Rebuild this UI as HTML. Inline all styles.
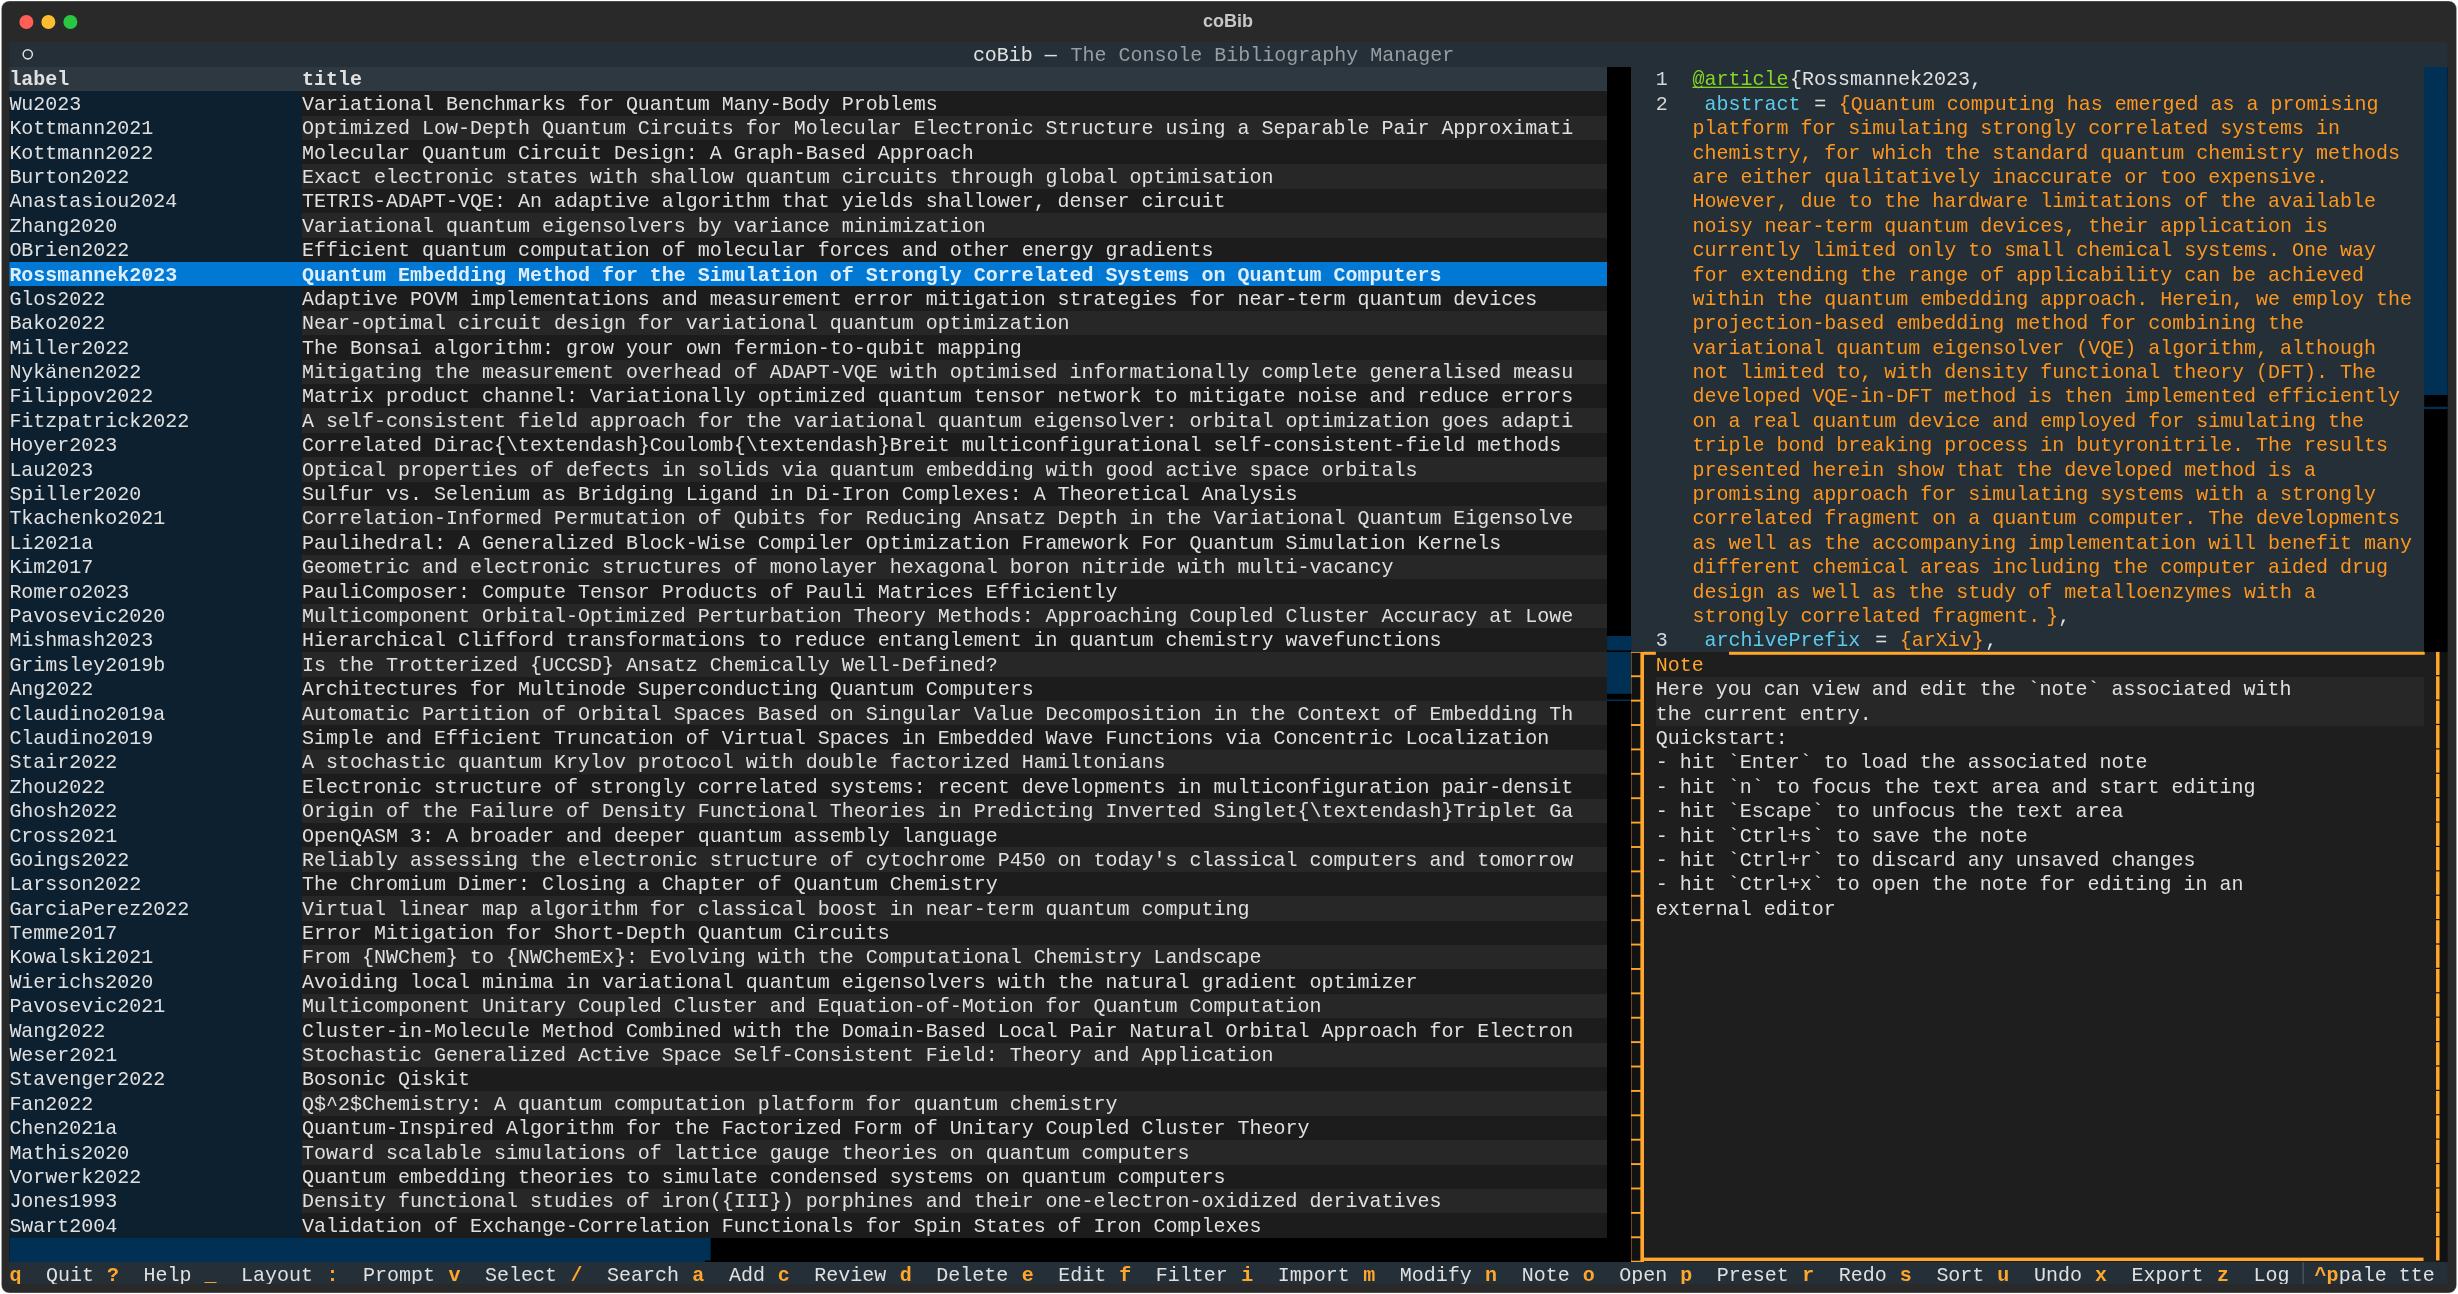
<!DOCTYPE html>
<html><head><meta charset="utf-8"><title>coBib</title>
<style>
html,body{margin:0;padding:0;background:#fff;overflow:hidden}
svg{display:block;will-change:transform}
.m text{font-family:"Liberation Mono",monospace;font-size:20px;white-space:pre}
.m text{text-decoration-skip-ink:none;text-decoration-thickness:1.2px;text-underline-offset:2.5px}
.t{font-family:"Liberation Sans",sans-serif;font-size:18px;font-weight:bold}
</style></head><body>
<svg width="2458" height="1294" viewBox="0 0 2458 1294.4">
<defs><clipPath id="ct"><rect x="0" y="0" width="2439" height="1243.4"/></clipPath></defs>
<rect x="1" y="1" width="2456" height="1292.4" rx="8" fill="#292929" stroke="rgba(255,255,255,0.35)" stroke-width="1"/>
<text class="t" x="1228" y="27" fill="#c5c8c6" text-anchor="middle">coBib</text>
<g transform="translate(26,22)"><circle cx="0" cy="0" r="7" fill="#ff5f57"/><circle cx="22" cy="0" r="7" fill="#febc2e"/><circle cx="44" cy="0" r="7" fill="#28c840"/></g>
<g transform="translate(9,41)" clip-path="url(#ct)">
<rect x="0.00" y="1.50" width="2440.00" height="24.65" fill="#242f38" shape-rendering="crispEdges"/>
<rect x="0.00" y="25.90" width="1598.20" height="24.65" fill="#2d3840" shape-rendering="crispEdges"/>
<rect x="0.00" y="50.30" width="292.80" height="24.65" fill="#0c2030" shape-rendering="crispEdges"/>
<rect x="292.80" y="50.30" width="1305.40" height="24.65" fill="#1c1c1c" shape-rendering="crispEdges"/>
<rect x="0.00" y="74.70" width="292.80" height="24.65" fill="#0c2030" shape-rendering="crispEdges"/>
<rect x="292.80" y="74.70" width="1305.40" height="24.65" fill="#272727" shape-rendering="crispEdges"/>
<rect x="0.00" y="99.10" width="292.80" height="24.65" fill="#0c2030" shape-rendering="crispEdges"/>
<rect x="292.80" y="99.10" width="1305.40" height="24.65" fill="#1c1c1c" shape-rendering="crispEdges"/>
<rect x="0.00" y="123.50" width="292.80" height="24.65" fill="#0c2030" shape-rendering="crispEdges"/>
<rect x="292.80" y="123.50" width="1305.40" height="24.65" fill="#272727" shape-rendering="crispEdges"/>
<rect x="0.00" y="147.90" width="292.80" height="24.65" fill="#0c2030" shape-rendering="crispEdges"/>
<rect x="292.80" y="147.90" width="1305.40" height="24.65" fill="#1c1c1c" shape-rendering="crispEdges"/>
<rect x="0.00" y="172.30" width="292.80" height="24.65" fill="#0c2030" shape-rendering="crispEdges"/>
<rect x="292.80" y="172.30" width="1305.40" height="24.65" fill="#272727" shape-rendering="crispEdges"/>
<rect x="0.00" y="196.70" width="292.80" height="24.65" fill="#0c2030" shape-rendering="crispEdges"/>
<rect x="292.80" y="196.70" width="1305.40" height="24.65" fill="#1c1c1c" shape-rendering="crispEdges"/>
<rect x="0.00" y="221.10" width="1598.20" height="24.65" fill="#0178d4" shape-rendering="crispEdges"/>
<rect x="0.00" y="245.50" width="292.80" height="24.65" fill="#0c2030" shape-rendering="crispEdges"/>
<rect x="292.80" y="245.50" width="1305.40" height="24.65" fill="#1c1c1c" shape-rendering="crispEdges"/>
<rect x="0.00" y="269.90" width="292.80" height="24.65" fill="#0c2030" shape-rendering="crispEdges"/>
<rect x="292.80" y="269.90" width="1305.40" height="24.65" fill="#272727" shape-rendering="crispEdges"/>
<rect x="0.00" y="294.30" width="292.80" height="24.65" fill="#0c2030" shape-rendering="crispEdges"/>
<rect x="292.80" y="294.30" width="1305.40" height="24.65" fill="#1c1c1c" shape-rendering="crispEdges"/>
<rect x="0.00" y="318.70" width="292.80" height="24.65" fill="#0c2030" shape-rendering="crispEdges"/>
<rect x="292.80" y="318.70" width="1305.40" height="24.65" fill="#272727" shape-rendering="crispEdges"/>
<rect x="0.00" y="343.10" width="292.80" height="24.65" fill="#0c2030" shape-rendering="crispEdges"/>
<rect x="292.80" y="343.10" width="1305.40" height="24.65" fill="#1c1c1c" shape-rendering="crispEdges"/>
<rect x="0.00" y="367.50" width="292.80" height="24.65" fill="#0c2030" shape-rendering="crispEdges"/>
<rect x="292.80" y="367.50" width="1305.40" height="24.65" fill="#272727" shape-rendering="crispEdges"/>
<rect x="0.00" y="391.90" width="292.80" height="24.65" fill="#0c2030" shape-rendering="crispEdges"/>
<rect x="292.80" y="391.90" width="1305.40" height="24.65" fill="#1c1c1c" shape-rendering="crispEdges"/>
<rect x="0.00" y="416.30" width="292.80" height="24.65" fill="#0c2030" shape-rendering="crispEdges"/>
<rect x="292.80" y="416.30" width="1305.40" height="24.65" fill="#272727" shape-rendering="crispEdges"/>
<rect x="0.00" y="440.70" width="292.80" height="24.65" fill="#0c2030" shape-rendering="crispEdges"/>
<rect x="292.80" y="440.70" width="1305.40" height="24.65" fill="#1c1c1c" shape-rendering="crispEdges"/>
<rect x="0.00" y="465.10" width="292.80" height="24.65" fill="#0c2030" shape-rendering="crispEdges"/>
<rect x="292.80" y="465.10" width="1305.40" height="24.65" fill="#272727" shape-rendering="crispEdges"/>
<rect x="0.00" y="489.50" width="292.80" height="24.65" fill="#0c2030" shape-rendering="crispEdges"/>
<rect x="292.80" y="489.50" width="1305.40" height="24.65" fill="#1c1c1c" shape-rendering="crispEdges"/>
<rect x="0.00" y="513.90" width="292.80" height="24.65" fill="#0c2030" shape-rendering="crispEdges"/>
<rect x="292.80" y="513.90" width="1305.40" height="24.65" fill="#272727" shape-rendering="crispEdges"/>
<rect x="0.00" y="538.30" width="292.80" height="24.65" fill="#0c2030" shape-rendering="crispEdges"/>
<rect x="292.80" y="538.30" width="1305.40" height="24.65" fill="#1c1c1c" shape-rendering="crispEdges"/>
<rect x="0.00" y="562.70" width="292.80" height="24.65" fill="#0c2030" shape-rendering="crispEdges"/>
<rect x="292.80" y="562.70" width="1305.40" height="24.65" fill="#272727" shape-rendering="crispEdges"/>
<rect x="0.00" y="587.10" width="292.80" height="24.65" fill="#0c2030" shape-rendering="crispEdges"/>
<rect x="292.80" y="587.10" width="1305.40" height="24.65" fill="#1c1c1c" shape-rendering="crispEdges"/>
<rect x="0.00" y="611.50" width="292.80" height="24.65" fill="#0c2030" shape-rendering="crispEdges"/>
<rect x="292.80" y="611.50" width="1305.40" height="24.65" fill="#272727" shape-rendering="crispEdges"/>
<rect x="0.00" y="635.90" width="292.80" height="24.65" fill="#0c2030" shape-rendering="crispEdges"/>
<rect x="292.80" y="635.90" width="1305.40" height="24.65" fill="#1c1c1c" shape-rendering="crispEdges"/>
<rect x="0.00" y="660.30" width="292.80" height="24.65" fill="#0c2030" shape-rendering="crispEdges"/>
<rect x="292.80" y="660.30" width="1305.40" height="24.65" fill="#272727" shape-rendering="crispEdges"/>
<rect x="0.00" y="684.70" width="292.80" height="24.65" fill="#0c2030" shape-rendering="crispEdges"/>
<rect x="292.80" y="684.70" width="1305.40" height="24.65" fill="#1c1c1c" shape-rendering="crispEdges"/>
<rect x="0.00" y="709.10" width="292.80" height="24.65" fill="#0c2030" shape-rendering="crispEdges"/>
<rect x="292.80" y="709.10" width="1305.40" height="24.65" fill="#272727" shape-rendering="crispEdges"/>
<rect x="0.00" y="733.50" width="292.80" height="24.65" fill="#0c2030" shape-rendering="crispEdges"/>
<rect x="292.80" y="733.50" width="1305.40" height="24.65" fill="#1c1c1c" shape-rendering="crispEdges"/>
<rect x="0.00" y="757.90" width="292.80" height="24.65" fill="#0c2030" shape-rendering="crispEdges"/>
<rect x="292.80" y="757.90" width="1305.40" height="24.65" fill="#272727" shape-rendering="crispEdges"/>
<rect x="0.00" y="782.30" width="292.80" height="24.65" fill="#0c2030" shape-rendering="crispEdges"/>
<rect x="292.80" y="782.30" width="1305.40" height="24.65" fill="#1c1c1c" shape-rendering="crispEdges"/>
<rect x="0.00" y="806.70" width="292.80" height="24.65" fill="#0c2030" shape-rendering="crispEdges"/>
<rect x="292.80" y="806.70" width="1305.40" height="24.65" fill="#272727" shape-rendering="crispEdges"/>
<rect x="0.00" y="831.10" width="292.80" height="24.65" fill="#0c2030" shape-rendering="crispEdges"/>
<rect x="292.80" y="831.10" width="1305.40" height="24.65" fill="#1c1c1c" shape-rendering="crispEdges"/>
<rect x="0.00" y="855.50" width="292.80" height="24.65" fill="#0c2030" shape-rendering="crispEdges"/>
<rect x="292.80" y="855.50" width="1305.40" height="24.65" fill="#272727" shape-rendering="crispEdges"/>
<rect x="0.00" y="879.90" width="292.80" height="24.65" fill="#0c2030" shape-rendering="crispEdges"/>
<rect x="292.80" y="879.90" width="1305.40" height="24.65" fill="#1c1c1c" shape-rendering="crispEdges"/>
<rect x="0.00" y="904.30" width="292.80" height="24.65" fill="#0c2030" shape-rendering="crispEdges"/>
<rect x="292.80" y="904.30" width="1305.40" height="24.65" fill="#272727" shape-rendering="crispEdges"/>
<rect x="0.00" y="928.70" width="292.80" height="24.65" fill="#0c2030" shape-rendering="crispEdges"/>
<rect x="292.80" y="928.70" width="1305.40" height="24.65" fill="#1c1c1c" shape-rendering="crispEdges"/>
<rect x="0.00" y="953.10" width="292.80" height="24.65" fill="#0c2030" shape-rendering="crispEdges"/>
<rect x="292.80" y="953.10" width="1305.40" height="24.65" fill="#272727" shape-rendering="crispEdges"/>
<rect x="0.00" y="977.50" width="292.80" height="24.65" fill="#0c2030" shape-rendering="crispEdges"/>
<rect x="292.80" y="977.50" width="1305.40" height="24.65" fill="#1c1c1c" shape-rendering="crispEdges"/>
<rect x="0.00" y="1001.90" width="292.80" height="24.65" fill="#0c2030" shape-rendering="crispEdges"/>
<rect x="292.80" y="1001.90" width="1305.40" height="24.65" fill="#272727" shape-rendering="crispEdges"/>
<rect x="0.00" y="1026.30" width="292.80" height="24.65" fill="#0c2030" shape-rendering="crispEdges"/>
<rect x="292.80" y="1026.30" width="1305.40" height="24.65" fill="#1c1c1c" shape-rendering="crispEdges"/>
<rect x="0.00" y="1050.70" width="292.80" height="24.65" fill="#0c2030" shape-rendering="crispEdges"/>
<rect x="292.80" y="1050.70" width="1305.40" height="24.65" fill="#272727" shape-rendering="crispEdges"/>
<rect x="0.00" y="1075.10" width="292.80" height="24.65" fill="#0c2030" shape-rendering="crispEdges"/>
<rect x="292.80" y="1075.10" width="1305.40" height="24.65" fill="#1c1c1c" shape-rendering="crispEdges"/>
<rect x="0.00" y="1099.50" width="292.80" height="24.65" fill="#0c2030" shape-rendering="crispEdges"/>
<rect x="292.80" y="1099.50" width="1305.40" height="24.65" fill="#272727" shape-rendering="crispEdges"/>
<rect x="0.00" y="1123.90" width="292.80" height="24.65" fill="#0c2030" shape-rendering="crispEdges"/>
<rect x="292.80" y="1123.90" width="1305.40" height="24.65" fill="#1c1c1c" shape-rendering="crispEdges"/>
<rect x="0.00" y="1148.30" width="292.80" height="24.65" fill="#0c2030" shape-rendering="crispEdges"/>
<rect x="292.80" y="1148.30" width="1305.40" height="24.65" fill="#272727" shape-rendering="crispEdges"/>
<rect x="0.00" y="1172.70" width="292.80" height="24.65" fill="#0c2030" shape-rendering="crispEdges"/>
<rect x="292.80" y="1172.70" width="1305.40" height="24.65" fill="#1c1c1c" shape-rendering="crispEdges"/>
<rect x="1598.20" y="25.90" width="24.40" height="24.65" fill="#000000" shape-rendering="crispEdges"/>
<rect x="1598.20" y="50.30" width="24.40" height="24.65" fill="#000000" shape-rendering="crispEdges"/>
<rect x="1598.20" y="74.70" width="24.40" height="24.65" fill="#000000" shape-rendering="crispEdges"/>
<rect x="1598.20" y="99.10" width="24.40" height="24.65" fill="#000000" shape-rendering="crispEdges"/>
<rect x="1598.20" y="123.50" width="24.40" height="24.65" fill="#000000" shape-rendering="crispEdges"/>
<rect x="1598.20" y="147.90" width="24.40" height="24.65" fill="#000000" shape-rendering="crispEdges"/>
<rect x="1598.20" y="172.30" width="24.40" height="24.65" fill="#000000" shape-rendering="crispEdges"/>
<rect x="1598.20" y="196.70" width="24.40" height="24.65" fill="#000000" shape-rendering="crispEdges"/>
<rect x="1598.20" y="221.10" width="24.40" height="24.65" fill="#000000" shape-rendering="crispEdges"/>
<rect x="1598.20" y="245.50" width="24.40" height="24.65" fill="#000000" shape-rendering="crispEdges"/>
<rect x="1598.20" y="269.90" width="24.40" height="24.65" fill="#000000" shape-rendering="crispEdges"/>
<rect x="1598.20" y="294.30" width="24.40" height="24.65" fill="#000000" shape-rendering="crispEdges"/>
<rect x="1598.20" y="318.70" width="24.40" height="24.65" fill="#000000" shape-rendering="crispEdges"/>
<rect x="1598.20" y="343.10" width="24.40" height="24.65" fill="#000000" shape-rendering="crispEdges"/>
<rect x="1598.20" y="367.50" width="24.40" height="24.65" fill="#000000" shape-rendering="crispEdges"/>
<rect x="1598.20" y="391.90" width="24.40" height="24.65" fill="#000000" shape-rendering="crispEdges"/>
<rect x="1598.20" y="416.30" width="24.40" height="24.65" fill="#000000" shape-rendering="crispEdges"/>
<rect x="1598.20" y="440.70" width="24.40" height="24.65" fill="#000000" shape-rendering="crispEdges"/>
<rect x="1598.20" y="465.10" width="24.40" height="24.65" fill="#000000" shape-rendering="crispEdges"/>
<rect x="1598.20" y="489.50" width="24.40" height="24.65" fill="#000000" shape-rendering="crispEdges"/>
<rect x="1598.20" y="513.90" width="24.40" height="24.65" fill="#000000" shape-rendering="crispEdges"/>
<rect x="1598.20" y="538.30" width="24.40" height="24.65" fill="#000000" shape-rendering="crispEdges"/>
<rect x="1598.20" y="562.70" width="24.40" height="24.65" fill="#000000" shape-rendering="crispEdges"/>
<rect x="1598.20" y="587.10" width="24.40" height="24.65" fill="#000000" shape-rendering="crispEdges"/>
<rect x="1598.20" y="611.50" width="24.40" height="24.65" fill="#000000" shape-rendering="crispEdges"/>
<rect x="1598.20" y="635.90" width="24.40" height="24.65" fill="#000000" shape-rendering="crispEdges"/>
<rect x="1598.20" y="660.30" width="24.40" height="24.65" fill="#000000" shape-rendering="crispEdges"/>
<rect x="1598.20" y="684.70" width="24.40" height="24.65" fill="#000000" shape-rendering="crispEdges"/>
<rect x="1598.20" y="709.10" width="24.40" height="24.65" fill="#000000" shape-rendering="crispEdges"/>
<rect x="1598.20" y="733.50" width="24.40" height="24.65" fill="#000000" shape-rendering="crispEdges"/>
<rect x="1598.20" y="757.90" width="24.40" height="24.65" fill="#000000" shape-rendering="crispEdges"/>
<rect x="1598.20" y="782.30" width="24.40" height="24.65" fill="#000000" shape-rendering="crispEdges"/>
<rect x="1598.20" y="806.70" width="24.40" height="24.65" fill="#000000" shape-rendering="crispEdges"/>
<rect x="1598.20" y="831.10" width="24.40" height="24.65" fill="#000000" shape-rendering="crispEdges"/>
<rect x="1598.20" y="855.50" width="24.40" height="24.65" fill="#000000" shape-rendering="crispEdges"/>
<rect x="1598.20" y="879.90" width="24.40" height="24.65" fill="#000000" shape-rendering="crispEdges"/>
<rect x="1598.20" y="904.30" width="24.40" height="24.65" fill="#000000" shape-rendering="crispEdges"/>
<rect x="1598.20" y="928.70" width="24.40" height="24.65" fill="#000000" shape-rendering="crispEdges"/>
<rect x="1598.20" y="953.10" width="24.40" height="24.65" fill="#000000" shape-rendering="crispEdges"/>
<rect x="1598.20" y="977.50" width="24.40" height="24.65" fill="#000000" shape-rendering="crispEdges"/>
<rect x="1598.20" y="1001.90" width="24.40" height="24.65" fill="#000000" shape-rendering="crispEdges"/>
<rect x="1598.20" y="1026.30" width="24.40" height="24.65" fill="#000000" shape-rendering="crispEdges"/>
<rect x="1598.20" y="1050.70" width="24.40" height="24.65" fill="#000000" shape-rendering="crispEdges"/>
<rect x="1598.20" y="1075.10" width="24.40" height="24.65" fill="#000000" shape-rendering="crispEdges"/>
<rect x="1598.20" y="1099.50" width="24.40" height="24.65" fill="#000000" shape-rendering="crispEdges"/>
<rect x="1598.20" y="1123.90" width="24.40" height="24.65" fill="#000000" shape-rendering="crispEdges"/>
<rect x="1598.20" y="1148.30" width="24.40" height="24.65" fill="#000000" shape-rendering="crispEdges"/>
<rect x="1598.20" y="1172.70" width="24.40" height="24.65" fill="#000000" shape-rendering="crispEdges"/>
<rect x="1598.20" y="611.50" width="24.40" height="24.65" fill="#003054" shape-rendering="crispEdges"/>
<rect x="1598.20" y="635.90" width="24.40" height="24.65" fill="#003054" shape-rendering="crispEdges"/>
<rect x="0.00" y="1197.10" width="1598.20" height="24.65" fill="#000000" shape-rendering="crispEdges"/>
<rect x="0.00" y="1197.10" width="695.40" height="24.65" fill="#003054" shape-rendering="crispEdges"/>
<rect x="1598.20" y="1197.10" width="24.40" height="24.65" fill="#000000" shape-rendering="crispEdges"/>
<rect x="1622.60" y="25.90" width="793.00" height="24.65" fill="#242f38" shape-rendering="crispEdges"/>
<rect x="2415.60" y="25.90" width="24.40" height="24.65" fill="#000000" shape-rendering="crispEdges"/>
<rect x="1622.60" y="50.30" width="793.00" height="24.65" fill="#242f38" shape-rendering="crispEdges"/>
<rect x="2415.60" y="50.30" width="24.40" height="24.65" fill="#000000" shape-rendering="crispEdges"/>
<rect x="1622.60" y="74.70" width="793.00" height="24.65" fill="#242f38" shape-rendering="crispEdges"/>
<rect x="2415.60" y="74.70" width="24.40" height="24.65" fill="#000000" shape-rendering="crispEdges"/>
<rect x="1622.60" y="99.10" width="793.00" height="24.65" fill="#242f38" shape-rendering="crispEdges"/>
<rect x="2415.60" y="99.10" width="24.40" height="24.65" fill="#000000" shape-rendering="crispEdges"/>
<rect x="1622.60" y="123.50" width="793.00" height="24.65" fill="#242f38" shape-rendering="crispEdges"/>
<rect x="2415.60" y="123.50" width="24.40" height="24.65" fill="#000000" shape-rendering="crispEdges"/>
<rect x="1622.60" y="147.90" width="793.00" height="24.65" fill="#242f38" shape-rendering="crispEdges"/>
<rect x="2415.60" y="147.90" width="24.40" height="24.65" fill="#000000" shape-rendering="crispEdges"/>
<rect x="1622.60" y="172.30" width="793.00" height="24.65" fill="#242f38" shape-rendering="crispEdges"/>
<rect x="2415.60" y="172.30" width="24.40" height="24.65" fill="#000000" shape-rendering="crispEdges"/>
<rect x="1622.60" y="196.70" width="793.00" height="24.65" fill="#242f38" shape-rendering="crispEdges"/>
<rect x="2415.60" y="196.70" width="24.40" height="24.65" fill="#000000" shape-rendering="crispEdges"/>
<rect x="1622.60" y="221.10" width="793.00" height="24.65" fill="#242f38" shape-rendering="crispEdges"/>
<rect x="2415.60" y="221.10" width="24.40" height="24.65" fill="#000000" shape-rendering="crispEdges"/>
<rect x="1622.60" y="245.50" width="793.00" height="24.65" fill="#242f38" shape-rendering="crispEdges"/>
<rect x="2415.60" y="245.50" width="24.40" height="24.65" fill="#000000" shape-rendering="crispEdges"/>
<rect x="1622.60" y="269.90" width="793.00" height="24.65" fill="#242f38" shape-rendering="crispEdges"/>
<rect x="2415.60" y="269.90" width="24.40" height="24.65" fill="#000000" shape-rendering="crispEdges"/>
<rect x="1622.60" y="294.30" width="793.00" height="24.65" fill="#242f38" shape-rendering="crispEdges"/>
<rect x="2415.60" y="294.30" width="24.40" height="24.65" fill="#000000" shape-rendering="crispEdges"/>
<rect x="1622.60" y="318.70" width="793.00" height="24.65" fill="#242f38" shape-rendering="crispEdges"/>
<rect x="2415.60" y="318.70" width="24.40" height="24.65" fill="#000000" shape-rendering="crispEdges"/>
<rect x="1622.60" y="343.10" width="793.00" height="24.65" fill="#242f38" shape-rendering="crispEdges"/>
<rect x="2415.60" y="343.10" width="24.40" height="24.65" fill="#000000" shape-rendering="crispEdges"/>
<rect x="1622.60" y="367.50" width="793.00" height="24.65" fill="#242f38" shape-rendering="crispEdges"/>
<rect x="2415.60" y="367.50" width="24.40" height="24.65" fill="#000000" shape-rendering="crispEdges"/>
<rect x="1622.60" y="391.90" width="793.00" height="24.65" fill="#242f38" shape-rendering="crispEdges"/>
<rect x="2415.60" y="391.90" width="24.40" height="24.65" fill="#000000" shape-rendering="crispEdges"/>
<rect x="1622.60" y="416.30" width="793.00" height="24.65" fill="#242f38" shape-rendering="crispEdges"/>
<rect x="2415.60" y="416.30" width="24.40" height="24.65" fill="#000000" shape-rendering="crispEdges"/>
<rect x="1622.60" y="440.70" width="793.00" height="24.65" fill="#242f38" shape-rendering="crispEdges"/>
<rect x="2415.60" y="440.70" width="24.40" height="24.65" fill="#000000" shape-rendering="crispEdges"/>
<rect x="1622.60" y="465.10" width="793.00" height="24.65" fill="#242f38" shape-rendering="crispEdges"/>
<rect x="2415.60" y="465.10" width="24.40" height="24.65" fill="#000000" shape-rendering="crispEdges"/>
<rect x="1622.60" y="489.50" width="793.00" height="24.65" fill="#242f38" shape-rendering="crispEdges"/>
<rect x="2415.60" y="489.50" width="24.40" height="24.65" fill="#000000" shape-rendering="crispEdges"/>
<rect x="1622.60" y="513.90" width="793.00" height="24.65" fill="#242f38" shape-rendering="crispEdges"/>
<rect x="2415.60" y="513.90" width="24.40" height="24.65" fill="#000000" shape-rendering="crispEdges"/>
<rect x="1622.60" y="538.30" width="793.00" height="24.65" fill="#242f38" shape-rendering="crispEdges"/>
<rect x="2415.60" y="538.30" width="24.40" height="24.65" fill="#000000" shape-rendering="crispEdges"/>
<rect x="1622.60" y="562.70" width="793.00" height="24.65" fill="#242f38" shape-rendering="crispEdges"/>
<rect x="2415.60" y="562.70" width="24.40" height="24.65" fill="#000000" shape-rendering="crispEdges"/>
<rect x="1622.60" y="587.10" width="793.00" height="24.65" fill="#242f38" shape-rendering="crispEdges"/>
<rect x="2415.60" y="587.10" width="24.40" height="24.65" fill="#000000" shape-rendering="crispEdges"/>
<rect x="2415.60" y="25.90" width="24.40" height="24.65" fill="#003054" shape-rendering="crispEdges"/>
<rect x="2415.60" y="50.30" width="24.40" height="24.65" fill="#003054" shape-rendering="crispEdges"/>
<rect x="2415.60" y="74.70" width="24.40" height="24.65" fill="#003054" shape-rendering="crispEdges"/>
<rect x="2415.60" y="99.10" width="24.40" height="24.65" fill="#003054" shape-rendering="crispEdges"/>
<rect x="2415.60" y="123.50" width="24.40" height="24.65" fill="#003054" shape-rendering="crispEdges"/>
<rect x="2415.60" y="147.90" width="24.40" height="24.65" fill="#003054" shape-rendering="crispEdges"/>
<rect x="2415.60" y="172.30" width="24.40" height="24.65" fill="#003054" shape-rendering="crispEdges"/>
<rect x="2415.60" y="196.70" width="24.40" height="24.65" fill="#003054" shape-rendering="crispEdges"/>
<rect x="2415.60" y="221.10" width="24.40" height="24.65" fill="#003054" shape-rendering="crispEdges"/>
<rect x="2415.60" y="245.50" width="24.40" height="24.65" fill="#003054" shape-rendering="crispEdges"/>
<rect x="2415.60" y="269.90" width="24.40" height="24.65" fill="#003054" shape-rendering="crispEdges"/>
<rect x="2415.60" y="294.30" width="24.40" height="24.65" fill="#003054" shape-rendering="crispEdges"/>
<rect x="2415.60" y="318.70" width="24.40" height="24.65" fill="#003054" shape-rendering="crispEdges"/>
<rect x="2415.60" y="343.10" width="24.40" height="24.65" fill="#003054" shape-rendering="crispEdges"/>
<rect x="1622.60" y="611.50" width="12.20" height="24.65" fill="#ffa62b" shape-rendering="crispEdges"/>
<rect x="1634.80" y="611.50" width="793.00" height="24.65" fill="#1e1e1e" shape-rendering="crispEdges"/>
<rect x="2427.80" y="611.50" width="12.20" height="24.65" fill="#121212" shape-rendering="crispEdges"/>
<rect x="1622.60" y="635.90" width="12.20" height="24.65" fill="#ffa62b" shape-rendering="crispEdges"/>
<rect x="1634.80" y="635.90" width="793.00" height="24.65" fill="#1e1e1e" shape-rendering="crispEdges"/>
<rect x="2427.80" y="635.90" width="12.20" height="24.65" fill="#121212" shape-rendering="crispEdges"/>
<rect x="1622.60" y="660.30" width="12.20" height="24.65" fill="#ffa62b" shape-rendering="crispEdges"/>
<rect x="1634.80" y="660.30" width="793.00" height="24.65" fill="#1e1e1e" shape-rendering="crispEdges"/>
<rect x="2427.80" y="660.30" width="12.20" height="24.65" fill="#121212" shape-rendering="crispEdges"/>
<rect x="1622.60" y="684.70" width="12.20" height="24.65" fill="#ffa62b" shape-rendering="crispEdges"/>
<rect x="1634.80" y="684.70" width="793.00" height="24.65" fill="#1e1e1e" shape-rendering="crispEdges"/>
<rect x="2427.80" y="684.70" width="12.20" height="24.65" fill="#121212" shape-rendering="crispEdges"/>
<rect x="1622.60" y="709.10" width="12.20" height="24.65" fill="#ffa62b" shape-rendering="crispEdges"/>
<rect x="1634.80" y="709.10" width="793.00" height="24.65" fill="#1e1e1e" shape-rendering="crispEdges"/>
<rect x="2427.80" y="709.10" width="12.20" height="24.65" fill="#121212" shape-rendering="crispEdges"/>
<rect x="1622.60" y="733.50" width="12.20" height="24.65" fill="#ffa62b" shape-rendering="crispEdges"/>
<rect x="1634.80" y="733.50" width="793.00" height="24.65" fill="#1e1e1e" shape-rendering="crispEdges"/>
<rect x="2427.80" y="733.50" width="12.20" height="24.65" fill="#121212" shape-rendering="crispEdges"/>
<rect x="1622.60" y="757.90" width="12.20" height="24.65" fill="#ffa62b" shape-rendering="crispEdges"/>
<rect x="1634.80" y="757.90" width="793.00" height="24.65" fill="#1e1e1e" shape-rendering="crispEdges"/>
<rect x="2427.80" y="757.90" width="12.20" height="24.65" fill="#121212" shape-rendering="crispEdges"/>
<rect x="1622.60" y="782.30" width="12.20" height="24.65" fill="#ffa62b" shape-rendering="crispEdges"/>
<rect x="1634.80" y="782.30" width="793.00" height="24.65" fill="#1e1e1e" shape-rendering="crispEdges"/>
<rect x="2427.80" y="782.30" width="12.20" height="24.65" fill="#121212" shape-rendering="crispEdges"/>
<rect x="1622.60" y="806.70" width="12.20" height="24.65" fill="#ffa62b" shape-rendering="crispEdges"/>
<rect x="1634.80" y="806.70" width="793.00" height="24.65" fill="#1e1e1e" shape-rendering="crispEdges"/>
<rect x="2427.80" y="806.70" width="12.20" height="24.65" fill="#121212" shape-rendering="crispEdges"/>
<rect x="1622.60" y="831.10" width="12.20" height="24.65" fill="#ffa62b" shape-rendering="crispEdges"/>
<rect x="1634.80" y="831.10" width="793.00" height="24.65" fill="#1e1e1e" shape-rendering="crispEdges"/>
<rect x="2427.80" y="831.10" width="12.20" height="24.65" fill="#121212" shape-rendering="crispEdges"/>
<rect x="1622.60" y="855.50" width="12.20" height="24.65" fill="#ffa62b" shape-rendering="crispEdges"/>
<rect x="1634.80" y="855.50" width="793.00" height="24.65" fill="#1e1e1e" shape-rendering="crispEdges"/>
<rect x="2427.80" y="855.50" width="12.20" height="24.65" fill="#121212" shape-rendering="crispEdges"/>
<rect x="1622.60" y="879.90" width="12.20" height="24.65" fill="#ffa62b" shape-rendering="crispEdges"/>
<rect x="1634.80" y="879.90" width="793.00" height="24.65" fill="#1e1e1e" shape-rendering="crispEdges"/>
<rect x="2427.80" y="879.90" width="12.20" height="24.65" fill="#121212" shape-rendering="crispEdges"/>
<rect x="1622.60" y="904.30" width="12.20" height="24.65" fill="#ffa62b" shape-rendering="crispEdges"/>
<rect x="1634.80" y="904.30" width="793.00" height="24.65" fill="#1e1e1e" shape-rendering="crispEdges"/>
<rect x="2427.80" y="904.30" width="12.20" height="24.65" fill="#121212" shape-rendering="crispEdges"/>
<rect x="1622.60" y="928.70" width="12.20" height="24.65" fill="#ffa62b" shape-rendering="crispEdges"/>
<rect x="1634.80" y="928.70" width="793.00" height="24.65" fill="#1e1e1e" shape-rendering="crispEdges"/>
<rect x="2427.80" y="928.70" width="12.20" height="24.65" fill="#121212" shape-rendering="crispEdges"/>
<rect x="1622.60" y="953.10" width="12.20" height="24.65" fill="#ffa62b" shape-rendering="crispEdges"/>
<rect x="1634.80" y="953.10" width="793.00" height="24.65" fill="#1e1e1e" shape-rendering="crispEdges"/>
<rect x="2427.80" y="953.10" width="12.20" height="24.65" fill="#121212" shape-rendering="crispEdges"/>
<rect x="1622.60" y="977.50" width="12.20" height="24.65" fill="#ffa62b" shape-rendering="crispEdges"/>
<rect x="1634.80" y="977.50" width="793.00" height="24.65" fill="#1e1e1e" shape-rendering="crispEdges"/>
<rect x="2427.80" y="977.50" width="12.20" height="24.65" fill="#121212" shape-rendering="crispEdges"/>
<rect x="1622.60" y="1001.90" width="12.20" height="24.65" fill="#ffa62b" shape-rendering="crispEdges"/>
<rect x="1634.80" y="1001.90" width="793.00" height="24.65" fill="#1e1e1e" shape-rendering="crispEdges"/>
<rect x="2427.80" y="1001.90" width="12.20" height="24.65" fill="#121212" shape-rendering="crispEdges"/>
<rect x="1622.60" y="1026.30" width="12.20" height="24.65" fill="#ffa62b" shape-rendering="crispEdges"/>
<rect x="1634.80" y="1026.30" width="793.00" height="24.65" fill="#1e1e1e" shape-rendering="crispEdges"/>
<rect x="2427.80" y="1026.30" width="12.20" height="24.65" fill="#121212" shape-rendering="crispEdges"/>
<rect x="1622.60" y="1050.70" width="12.20" height="24.65" fill="#ffa62b" shape-rendering="crispEdges"/>
<rect x="1634.80" y="1050.70" width="793.00" height="24.65" fill="#1e1e1e" shape-rendering="crispEdges"/>
<rect x="2427.80" y="1050.70" width="12.20" height="24.65" fill="#121212" shape-rendering="crispEdges"/>
<rect x="1622.60" y="1075.10" width="12.20" height="24.65" fill="#ffa62b" shape-rendering="crispEdges"/>
<rect x="1634.80" y="1075.10" width="793.00" height="24.65" fill="#1e1e1e" shape-rendering="crispEdges"/>
<rect x="2427.80" y="1075.10" width="12.20" height="24.65" fill="#121212" shape-rendering="crispEdges"/>
<rect x="1622.60" y="1099.50" width="12.20" height="24.65" fill="#ffa62b" shape-rendering="crispEdges"/>
<rect x="1634.80" y="1099.50" width="793.00" height="24.65" fill="#1e1e1e" shape-rendering="crispEdges"/>
<rect x="2427.80" y="1099.50" width="12.20" height="24.65" fill="#121212" shape-rendering="crispEdges"/>
<rect x="1622.60" y="1123.90" width="12.20" height="24.65" fill="#ffa62b" shape-rendering="crispEdges"/>
<rect x="1634.80" y="1123.90" width="793.00" height="24.65" fill="#1e1e1e" shape-rendering="crispEdges"/>
<rect x="2427.80" y="1123.90" width="12.20" height="24.65" fill="#121212" shape-rendering="crispEdges"/>
<rect x="1622.60" y="1148.30" width="12.20" height="24.65" fill="#ffa62b" shape-rendering="crispEdges"/>
<rect x="1634.80" y="1148.30" width="793.00" height="24.65" fill="#1e1e1e" shape-rendering="crispEdges"/>
<rect x="2427.80" y="1148.30" width="12.20" height="24.65" fill="#121212" shape-rendering="crispEdges"/>
<rect x="1622.60" y="1172.70" width="12.20" height="24.65" fill="#ffa62b" shape-rendering="crispEdges"/>
<rect x="1634.80" y="1172.70" width="793.00" height="24.65" fill="#1e1e1e" shape-rendering="crispEdges"/>
<rect x="2427.80" y="1172.70" width="12.20" height="24.65" fill="#121212" shape-rendering="crispEdges"/>
<rect x="1622.60" y="1197.10" width="12.20" height="24.65" fill="#ffa62b" shape-rendering="crispEdges"/>
<rect x="1634.80" y="1197.10" width="793.00" height="24.65" fill="#1e1e1e" shape-rendering="crispEdges"/>
<rect x="2427.80" y="1197.10" width="12.20" height="24.65" fill="#121212" shape-rendering="crispEdges"/>
<rect x="1647.00" y="635.90" width="768.60" height="24.65" fill="#272727" shape-rendering="crispEdges"/>
<rect x="1647.00" y="660.30" width="768.60" height="24.65" fill="#272727" shape-rendering="crispEdges"/>
<rect x="0.00" y="1221.50" width="2440.00" height="24.65" fill="#242f38" shape-rendering="crispEdges"/>
<circle cx="18.40" cy="13.30" r="4.6" fill="none" stroke="#e0e0e0" stroke-width="1.5"/>
<rect x="1598.20" y="595.20" width="24.40" height="14.40" fill="#003054"/>
<rect x="1598.20" y="653.00" width="24.40" height="5.70" fill="#000000"/>
<rect x="695.40" y="1197.20" width="6.10" height="22.70" fill="#003054"/>
<rect x="2415.60" y="354.10" width="24.40" height="11.80" fill="#000000"/>
<rect x="1683.60" y="45.70" width="96.00" height="1.30" fill="#85d723"/>
<rect x="1622.50" y="612.00" width="9.00" height="22.50" fill="#121212"/>
<rect x="2427.40" y="611.10" width="3.50" height="23.20" fill="#ffa62b"/>
<rect x="1622.50" y="636.40" width="9.00" height="22.50" fill="#121212"/>
<rect x="2427.40" y="635.50" width="3.50" height="23.20" fill="#ffa62b"/>
<rect x="1622.50" y="660.80" width="9.00" height="22.50" fill="#121212"/>
<rect x="2427.40" y="659.90" width="3.50" height="23.20" fill="#ffa62b"/>
<rect x="1622.50" y="685.20" width="9.00" height="22.50" fill="#121212"/>
<rect x="2427.40" y="684.30" width="3.50" height="23.20" fill="#ffa62b"/>
<rect x="1622.50" y="709.60" width="9.00" height="22.50" fill="#121212"/>
<rect x="2427.40" y="708.70" width="3.50" height="23.20" fill="#ffa62b"/>
<rect x="1622.50" y="734.00" width="9.00" height="22.50" fill="#121212"/>
<rect x="2427.40" y="733.10" width="3.50" height="23.20" fill="#ffa62b"/>
<rect x="1622.50" y="758.40" width="9.00" height="22.50" fill="#121212"/>
<rect x="2427.40" y="757.50" width="3.50" height="23.20" fill="#ffa62b"/>
<rect x="1622.50" y="782.80" width="9.00" height="22.50" fill="#121212"/>
<rect x="2427.40" y="781.90" width="3.50" height="23.20" fill="#ffa62b"/>
<rect x="1622.50" y="807.20" width="9.00" height="22.50" fill="#121212"/>
<rect x="2427.40" y="806.30" width="3.50" height="23.20" fill="#ffa62b"/>
<rect x="1622.50" y="831.60" width="9.00" height="22.50" fill="#121212"/>
<rect x="2427.40" y="830.70" width="3.50" height="23.20" fill="#ffa62b"/>
<rect x="1622.50" y="856.00" width="9.00" height="22.50" fill="#121212"/>
<rect x="2427.40" y="855.10" width="3.50" height="23.20" fill="#ffa62b"/>
<rect x="1622.50" y="880.40" width="9.00" height="22.50" fill="#121212"/>
<rect x="2427.40" y="879.50" width="3.50" height="23.20" fill="#ffa62b"/>
<rect x="1622.50" y="904.80" width="9.00" height="22.50" fill="#121212"/>
<rect x="2427.40" y="903.90" width="3.50" height="23.20" fill="#ffa62b"/>
<rect x="1622.50" y="929.20" width="9.00" height="22.50" fill="#121212"/>
<rect x="2427.40" y="928.30" width="3.50" height="23.20" fill="#ffa62b"/>
<rect x="1622.50" y="953.60" width="9.00" height="22.50" fill="#121212"/>
<rect x="2427.40" y="952.70" width="3.50" height="23.20" fill="#ffa62b"/>
<rect x="1622.50" y="978.00" width="9.00" height="22.50" fill="#121212"/>
<rect x="2427.40" y="977.10" width="3.50" height="23.20" fill="#ffa62b"/>
<rect x="1622.50" y="1002.40" width="9.00" height="22.50" fill="#121212"/>
<rect x="2427.40" y="1001.50" width="3.50" height="23.20" fill="#ffa62b"/>
<rect x="1622.50" y="1026.80" width="9.00" height="22.50" fill="#121212"/>
<rect x="2427.40" y="1025.90" width="3.50" height="23.20" fill="#ffa62b"/>
<rect x="1622.50" y="1051.20" width="9.00" height="22.50" fill="#121212"/>
<rect x="2427.40" y="1050.30" width="3.50" height="23.20" fill="#ffa62b"/>
<rect x="1622.50" y="1075.60" width="9.00" height="22.50" fill="#121212"/>
<rect x="2427.40" y="1074.70" width="3.50" height="23.20" fill="#ffa62b"/>
<rect x="1622.50" y="1100.00" width="9.00" height="22.50" fill="#121212"/>
<rect x="2427.40" y="1099.10" width="3.50" height="23.20" fill="#ffa62b"/>
<rect x="1622.50" y="1124.40" width="9.00" height="22.50" fill="#121212"/>
<rect x="2427.40" y="1123.50" width="3.50" height="23.20" fill="#ffa62b"/>
<rect x="1622.50" y="1148.80" width="9.00" height="22.50" fill="#121212"/>
<rect x="2427.40" y="1147.90" width="3.50" height="23.20" fill="#ffa62b"/>
<rect x="1622.50" y="1173.20" width="9.00" height="22.50" fill="#121212"/>
<rect x="2427.40" y="1172.30" width="3.50" height="23.20" fill="#ffa62b"/>
<rect x="1622.50" y="1197.60" width="9.00" height="22.50" fill="#121212"/>
<rect x="2427.40" y="1196.70" width="3.50" height="23.20" fill="#ffa62b"/>
<rect x="1634.80" y="611.00" width="12.20" height="3.00" fill="#ffa62b"/>
<rect x="1720.20" y="611.00" width="695.90" height="3.00" fill="#ffa62b"/>
<rect x="1634.80" y="1217.00" width="780.10" height="3.40" fill="#ffa62b"/>
<rect x="2293.80" y="1221.50" width="1.60" height="24.50" fill="#45515c"/>
<g class="m" xml:space="preserve">
<text x="963.80" y="20.00" fill="#e0e0e0">coBib — </text>
<text x="1061.40" y="20.00" fill="#979da2">The Console Bibliography Manager</text>
<text x="0.00" y="44.40" fill="#e0e0e0" font-weight="bold">label</text>
<text x="292.80" y="44.40" fill="#e0e0e0" font-weight="bold">title</text>
<text x="0.00" y="68.80" fill="#e0e0e0">Wu2023</text>
<text x="292.80" y="68.80" fill="#e0e0e0">Variational Benchmarks for Quantum Many-Body Problems</text>
<text x="0.00" y="93.20" fill="#e0e0e0">Kottmann2021</text>
<text x="292.80" y="93.20" fill="#e0e0e0">Optimized Low-Depth Quantum Circuits for Molecular Electronic Structure using a Separable Pair Approximati</text>
<text x="0.00" y="117.60" fill="#e0e0e0">Kottmann2022</text>
<text x="292.80" y="117.60" fill="#e0e0e0">Molecular Quantum Circuit Design: A Graph-Based Approach</text>
<text x="0.00" y="142.00" fill="#e0e0e0">Burton2022</text>
<text x="292.80" y="142.00" fill="#e0e0e0">Exact electronic states with shallow quantum circuits through global optimisation</text>
<text x="0.00" y="166.40" fill="#e0e0e0">Anastasiou2024</text>
<text x="292.80" y="166.40" fill="#e0e0e0">TETRIS-ADAPT-VQE: An adaptive algorithm that yields shallower, denser circuit</text>
<text x="0.00" y="190.80" fill="#e0e0e0">Zhang2020</text>
<text x="292.80" y="190.80" fill="#e0e0e0">Variational quantum eigensolvers by variance minimization</text>
<text x="0.00" y="215.20" fill="#e0e0e0">OBrien2022</text>
<text x="292.80" y="215.20" fill="#e0e0e0">Efficient quantum computation of molecular forces and other energy gradients</text>
<text x="0.00" y="239.60" fill="#ddedf9" font-weight="bold">Rossmannek2023</text>
<text x="292.80" y="239.60" fill="#ddedf9" font-weight="bold">Quantum Embedding Method for the Simulation of Strongly Correlated Systems on Quantum Computers</text>
<text x="0.00" y="264.00" fill="#e0e0e0">Glos2022</text>
<text x="292.80" y="264.00" fill="#e0e0e0">Adaptive POVM implementations and measurement error mitigation strategies for near-term quantum devices</text>
<text x="0.00" y="288.40" fill="#e0e0e0">Bako2022</text>
<text x="292.80" y="288.40" fill="#e0e0e0">Near-optimal circuit design for variational quantum optimization</text>
<text x="0.00" y="312.80" fill="#e0e0e0">Miller2022</text>
<text x="292.80" y="312.80" fill="#e0e0e0">The Bonsai algorithm: grow your own fermion-to-qubit mapping</text>
<text x="0.00" y="337.20" fill="#e0e0e0">Nykänen2022</text>
<text x="292.80" y="337.20" fill="#e0e0e0">Mitigating the measurement overhead of ADAPT-VQE with optimised informationally complete generalised measu</text>
<text x="0.00" y="361.60" fill="#e0e0e0">Filippov2022</text>
<text x="292.80" y="361.60" fill="#e0e0e0">Matrix product channel: Variationally optimized quantum tensor network to mitigate noise and reduce errors</text>
<text x="0.00" y="386.00" fill="#e0e0e0">Fitzpatrick2022</text>
<text x="292.80" y="386.00" fill="#e0e0e0">A self-consistent field approach for the variational quantum eigensolver: orbital optimization goes adapti</text>
<text x="0.00" y="410.40" fill="#e0e0e0">Hoyer2023</text>
<text x="292.80" y="410.40" fill="#e0e0e0">Correlated Dirac{\textendash}Coulomb{\textendash}Breit multiconfigurational self-consistent-field methods</text>
<text x="0.00" y="434.80" fill="#e0e0e0">Lau2023</text>
<text x="292.80" y="434.80" fill="#e0e0e0">Optical properties of defects in solids via quantum embedding with good active space orbitals</text>
<text x="0.00" y="459.20" fill="#e0e0e0">Spiller2020</text>
<text x="292.80" y="459.20" fill="#e0e0e0">Sulfur vs. Selenium as Bridging Ligand in Di-Iron Complexes: A Theoretical Analysis</text>
<text x="0.00" y="483.60" fill="#e0e0e0">Tkachenko2021</text>
<text x="292.80" y="483.60" fill="#e0e0e0">Correlation-Informed Permutation of Qubits for Reducing Ansatz Depth in the Variational Quantum Eigensolve</text>
<text x="0.00" y="508.00" fill="#e0e0e0">Li2021a</text>
<text x="292.80" y="508.00" fill="#e0e0e0">Paulihedral: A Generalized Block-Wise Compiler Optimization Framework For Quantum Simulation Kernels</text>
<text x="0.00" y="532.40" fill="#e0e0e0">Kim2017</text>
<text x="292.80" y="532.40" fill="#e0e0e0">Geometric and electronic structures of monolayer hexagonal boron nitride with multi-vacancy</text>
<text x="0.00" y="556.80" fill="#e0e0e0">Romero2023</text>
<text x="292.80" y="556.80" fill="#e0e0e0">PauliComposer: Compute Tensor Products of Pauli Matrices Efficiently</text>
<text x="0.00" y="581.20" fill="#e0e0e0">Pavosevic2020</text>
<text x="292.80" y="581.20" fill="#e0e0e0">Multicomponent Orbital-Optimized Perturbation Theory Methods: Approaching Coupled Cluster Accuracy at Lowe</text>
<text x="0.00" y="605.60" fill="#e0e0e0">Mishmash2023</text>
<text x="292.80" y="605.60" fill="#e0e0e0">Hierarchical Clifford transformations to reduce entanglement in quantum chemistry wavefunctions</text>
<text x="0.00" y="630.00" fill="#e0e0e0">Grimsley2019b</text>
<text x="292.80" y="630.00" fill="#e0e0e0">Is the Trotterized {UCCSD} Ansatz Chemically Well-Defined?</text>
<text x="0.00" y="654.40" fill="#e0e0e0">Ang2022</text>
<text x="292.80" y="654.40" fill="#e0e0e0">Architectures for Multinode Superconducting Quantum Computers</text>
<text x="0.00" y="678.80" fill="#e0e0e0">Claudino2019a</text>
<text x="292.80" y="678.80" fill="#e0e0e0">Automatic Partition of Orbital Spaces Based on Singular Value Decomposition in the Context of Embedding Th</text>
<text x="0.00" y="703.20" fill="#e0e0e0">Claudino2019</text>
<text x="292.80" y="703.20" fill="#e0e0e0">Simple and Efficient Truncation of Virtual Spaces in Embedded Wave Functions via Concentric Localization</text>
<text x="0.00" y="727.60" fill="#e0e0e0">Stair2022</text>
<text x="292.80" y="727.60" fill="#e0e0e0">A stochastic quantum Krylov protocol with double factorized Hamiltonians</text>
<text x="0.00" y="752.00" fill="#e0e0e0">Zhou2022</text>
<text x="292.80" y="752.00" fill="#e0e0e0">Electronic structure of strongly correlated systems: recent developments in multiconfiguration pair-densit</text>
<text x="0.00" y="776.40" fill="#e0e0e0">Ghosh2022</text>
<text x="292.80" y="776.40" fill="#e0e0e0">Origin of the Failure of Density Functional Theories in Predicting Inverted Singlet{\textendash}Triplet Ga</text>
<text x="0.00" y="800.80" fill="#e0e0e0">Cross2021</text>
<text x="292.80" y="800.80" fill="#e0e0e0">OpenQASM 3: A broader and deeper quantum assembly language</text>
<text x="0.00" y="825.20" fill="#e0e0e0">Goings2022</text>
<text x="292.80" y="825.20" fill="#e0e0e0">Reliably assessing the electronic structure of cytochrome P450 on today&#x27;s classical computers and tomorrow</text>
<text x="0.00" y="849.60" fill="#e0e0e0">Larsson2022</text>
<text x="292.80" y="849.60" fill="#e0e0e0">The Chromium Dimer: Closing a Chapter of Quantum Chemistry</text>
<text x="0.00" y="874.00" fill="#e0e0e0">GarciaPerez2022</text>
<text x="292.80" y="874.00" fill="#e0e0e0">Virtual linear map algorithm for classical boost in near-term quantum computing</text>
<text x="0.00" y="898.40" fill="#e0e0e0">Temme2017</text>
<text x="292.80" y="898.40" fill="#e0e0e0">Error Mitigation for Short-Depth Quantum Circuits</text>
<text x="0.00" y="922.80" fill="#e0e0e0">Kowalski2021</text>
<text x="292.80" y="922.80" fill="#e0e0e0">From {NWChem} to {NWChemEx}: Evolving with the Computational Chemistry Landscape</text>
<text x="0.00" y="947.20" fill="#e0e0e0">Wierichs2020</text>
<text x="292.80" y="947.20" fill="#e0e0e0">Avoiding local minima in variational quantum eigensolvers with the natural gradient optimizer</text>
<text x="0.00" y="971.60" fill="#e0e0e0">Pavosevic2021</text>
<text x="292.80" y="971.60" fill="#e0e0e0">Multicomponent Unitary Coupled Cluster and Equation-of-Motion for Quantum Computation</text>
<text x="0.00" y="996.00" fill="#e0e0e0">Wang2022</text>
<text x="292.80" y="996.00" fill="#e0e0e0">Cluster-in-Molecule Method Combined with the Domain-Based Local Pair Natural Orbital Approach for Electron</text>
<text x="0.00" y="1020.40" fill="#e0e0e0">Weser2021</text>
<text x="292.80" y="1020.40" fill="#e0e0e0">Stochastic Generalized Active Space Self-Consistent Field: Theory and Application</text>
<text x="0.00" y="1044.80" fill="#e0e0e0">Stavenger2022</text>
<text x="292.80" y="1044.80" fill="#e0e0e0">Bosonic Qiskit</text>
<text x="0.00" y="1069.20" fill="#e0e0e0">Fan2022</text>
<text x="292.80" y="1069.20" fill="#e0e0e0">Q$^2$Chemistry: A quantum computation platform for quantum chemistry</text>
<text x="0.00" y="1093.60" fill="#e0e0e0">Chen2021a</text>
<text x="292.80" y="1093.60" fill="#e0e0e0">Quantum-Inspired Algorithm for the Factorized Form of Unitary Coupled Cluster Theory</text>
<text x="0.00" y="1118.00" fill="#e0e0e0">Mathis2020</text>
<text x="292.80" y="1118.00" fill="#e0e0e0">Toward scalable simulations of lattice gauge theories on quantum computers</text>
<text x="0.00" y="1142.40" fill="#e0e0e0">Vorwerk2022</text>
<text x="292.80" y="1142.40" fill="#e0e0e0">Quantum embedding theories to simulate condensed systems on quantum computers</text>
<text x="0.00" y="1166.80" fill="#e0e0e0">Jones1993</text>
<text x="292.80" y="1166.80" fill="#e0e0e0">Density functional studies of iron({III}) porphines and their one-electron-oxidized derivatives</text>
<text x="0.00" y="1191.20" fill="#e0e0e0">Swart2004</text>
<text x="292.80" y="1191.20" fill="#e0e0e0">Validation of Exchange-Correlation Functionals for Spin States of Iron Complexes</text>
<text x="1647.00" y="44.40" fill="#d4d6d8">1</text>
<text x="1683.60" y="44.40" fill="#85d723">@article</text>
<text x="1781.20" y="44.40" fill="#e0e0e0">{Rossmannek2023,</text>
<text x="1647.00" y="68.80" fill="#d4d6d8">2</text>
<text x="1683.60" y="68.80" fill="#5ccbeb"> abstract</text>
<text x="1793.40" y="68.80" fill="#e0e0e0"> = </text>
<text x="1830.00" y="68.80" fill="#fd971f">{Quantum computing has emerged as a promising</text>
<text x="1683.60" y="93.20" fill="#fd971f">platform for simulating strongly correlated systems in</text>
<text x="1683.60" y="117.60" fill="#fd971f">chemistry, for which the standard quantum chemistry methods</text>
<text x="1683.60" y="142.00" fill="#fd971f">are either qualitatively inaccurate or too expensive.</text>
<text x="1683.60" y="166.40" fill="#fd971f">However, due to the hardware limitations of the available</text>
<text x="1683.60" y="190.80" fill="#fd971f">noisy near-term quantum devices, their application is</text>
<text x="1683.60" y="215.20" fill="#fd971f">currently limited only to small chemical systems. One way</text>
<text x="1683.60" y="239.60" fill="#fd971f">for extending the range of applicability can be achieved</text>
<text x="1683.60" y="264.00" fill="#fd971f">within the quantum embedding approach. Herein, we employ the</text>
<text x="1683.60" y="288.40" fill="#fd971f">projection-based embedding method for combining the</text>
<text x="1683.60" y="312.80" fill="#fd971f">variational quantum eigensolver (VQE) algorithm, although</text>
<text x="1683.60" y="337.20" fill="#fd971f">not limited to, with density functional theory (DFT). The</text>
<text x="1683.60" y="361.60" fill="#fd971f">developed VQE-in-DFT method is then implemented efficiently</text>
<text x="1683.60" y="386.00" fill="#fd971f">on a real quantum device and employed for simulating the</text>
<text x="1683.60" y="410.40" fill="#fd971f">triple bond breaking process in butyronitrile. The results</text>
<text x="1683.60" y="434.80" fill="#fd971f">presented herein show that the developed method is a</text>
<text x="1683.60" y="459.20" fill="#fd971f">promising approach for simulating systems with a strongly</text>
<text x="1683.60" y="483.60" fill="#fd971f">correlated fragment on a quantum computer. The developments</text>
<text x="1683.60" y="508.00" fill="#fd971f">as well as the accompanying implementation will benefit many</text>
<text x="1683.60" y="532.40" fill="#fd971f">different chemical areas including the computer aided drug</text>
<text x="1683.60" y="556.80" fill="#fd971f">design as well as the study of metalloenzymes with a</text>
<text x="1683.60" y="581.20" fill="#fd971f">strongly correlated fragment.</text>
<text x="2037.40" y="581.20" fill="#fd971f">}</text>
<text x="2049.60" y="581.20" fill="#e0e0e0">,</text>
<text x="1647.00" y="605.60" fill="#d4d6d8">3</text>
<text x="1683.60" y="605.60" fill="#5ccbeb"> archivePrefix</text>
<text x="1854.40" y="605.60" fill="#e0e0e0"> = </text>
<text x="1891.00" y="605.60" fill="#fd971f">{arXiv}</text>
<text x="1976.40" y="605.60" fill="#e0e0e0">,</text>
<text x="1647.00" y="630.00" fill="#ffa62b">Note</text>
<text x="1647.00" y="654.40" fill="#e0e0e0">Here you can view and edit the `note` associated with</text>
<text x="1647.00" y="678.80" fill="#e0e0e0">the current entry.</text>
<text x="1647.00" y="703.20" fill="#e0e0e0">Quickstart:</text>
<text x="1647.00" y="727.60" fill="#e0e0e0">- hit `Enter` to load the associated note</text>
<text x="1647.00" y="752.00" fill="#e0e0e0">- hit `n` to focus the text area and start editing</text>
<text x="1647.00" y="776.40" fill="#e0e0e0">- hit `Escape` to unfocus the text area</text>
<text x="1647.00" y="800.80" fill="#e0e0e0">- hit `Ctrl+s` to save the note</text>
<text x="1647.00" y="825.20" fill="#e0e0e0">- hit `Ctrl+r` to discard any unsaved changes</text>
<text x="1647.00" y="849.60" fill="#e0e0e0">- hit `Ctrl+x` to open the note for editing in an</text>
<text x="1647.00" y="874.00" fill="#e0e0e0">external editor</text>
<text x="0.00" y="1240.00" fill="#ffa62b" font-weight="bold">q</text>
<text x="36.60" y="1240.00" fill="#e0e0e0">Quit</text>
<text x="97.60" y="1240.00" fill="#ffa62b" font-weight="bold">?</text>
<text x="134.20" y="1240.00" fill="#e0e0e0">Help</text>
<text x="195.20" y="1240.00" fill="#ffa62b" font-weight="bold">_</text>
<text x="231.80" y="1240.00" fill="#e0e0e0">Layout</text>
<text x="317.20" y="1240.00" fill="#ffa62b" font-weight="bold">:</text>
<text x="353.80" y="1240.00" fill="#e0e0e0">Prompt</text>
<text x="439.20" y="1240.00" fill="#ffa62b" font-weight="bold">v</text>
<text x="475.80" y="1240.00" fill="#e0e0e0">Select</text>
<text x="561.20" y="1240.00" fill="#ffa62b" font-weight="bold">/</text>
<text x="597.80" y="1240.00" fill="#e0e0e0">Search</text>
<text x="683.20" y="1240.00" fill="#ffa62b" font-weight="bold">a</text>
<text x="719.80" y="1240.00" fill="#e0e0e0">Add</text>
<text x="768.60" y="1240.00" fill="#ffa62b" font-weight="bold">c</text>
<text x="805.20" y="1240.00" fill="#e0e0e0">Review</text>
<text x="890.60" y="1240.00" fill="#ffa62b" font-weight="bold">d</text>
<text x="927.20" y="1240.00" fill="#e0e0e0">Delete</text>
<text x="1012.60" y="1240.00" fill="#ffa62b" font-weight="bold">e</text>
<text x="1049.20" y="1240.00" fill="#e0e0e0">Edit</text>
<text x="1110.20" y="1240.00" fill="#ffa62b" font-weight="bold">f</text>
<text x="1146.80" y="1240.00" fill="#e0e0e0">Filter</text>
<text x="1232.20" y="1240.00" fill="#ffa62b" font-weight="bold">i</text>
<text x="1268.80" y="1240.00" fill="#e0e0e0">Import</text>
<text x="1354.20" y="1240.00" fill="#ffa62b" font-weight="bold">m</text>
<text x="1390.80" y="1240.00" fill="#e0e0e0">Modify</text>
<text x="1476.20" y="1240.00" fill="#ffa62b" font-weight="bold">n</text>
<text x="1512.80" y="1240.00" fill="#e0e0e0">Note</text>
<text x="1573.80" y="1240.00" fill="#ffa62b" font-weight="bold">o</text>
<text x="1610.40" y="1240.00" fill="#e0e0e0">Open</text>
<text x="1671.40" y="1240.00" fill="#ffa62b" font-weight="bold">p</text>
<text x="1708.00" y="1240.00" fill="#e0e0e0">Preset</text>
<text x="1793.40" y="1240.00" fill="#ffa62b" font-weight="bold">r</text>
<text x="1830.00" y="1240.00" fill="#e0e0e0">Redo</text>
<text x="1891.00" y="1240.00" fill="#ffa62b" font-weight="bold">s</text>
<text x="1927.60" y="1240.00" fill="#e0e0e0">Sort</text>
<text x="1988.60" y="1240.00" fill="#ffa62b" font-weight="bold">u</text>
<text x="2025.20" y="1240.00" fill="#e0e0e0">Undo</text>
<text x="2086.20" y="1240.00" fill="#ffa62b" font-weight="bold">x</text>
<text x="2122.80" y="1240.00" fill="#e0e0e0">Export</text>
<text x="2208.20" y="1240.00" fill="#ffa62b" font-weight="bold">z</text>
<text x="2244.80" y="1240.00" fill="#e0e0e0">Log</text>
<text x="2305.80" y="1240.00" fill="#ffa62b" font-weight="bold">^p</text>
<text x="2330.20" y="1240.00" fill="#e0e0e0">pale tte</text>
</g>
</g>
</svg>
</body></html>
